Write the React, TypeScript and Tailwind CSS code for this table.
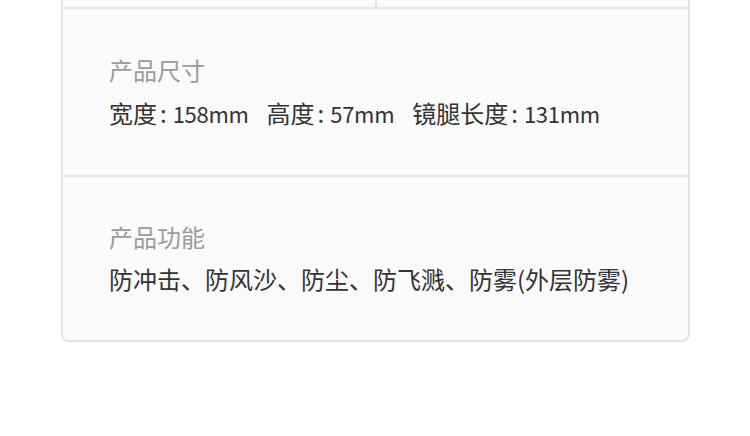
const font = { fontFamily: '"Noto Sans CJK SC", "Noto Sans", sans-serif' };

function Spec({ name, value }: { name: string; value: string }) {
  return (
    <span>
      {name}
      <span className="ml-[3px] mr-[6px]">:</span>
      <span className="text-[22px] tracking-[-0.3px]">{value}</span>
    </span>
  );
}

export default function App() {
  return (
    <div className="w-[750px] h-[436px] bg-white overflow-hidden" style={font}>
      <div className="ml-[61px] w-[629px] bg-[#fafafa] border-2 border-t-0 border-[#e4e4e4] rounded-b-[8px]">
        <div className="grid grid-cols-2 h-[9px] border-b-2 border-[#e4e4e4]">
          <div className="border-r-2 border-[#e4e4e4] w-[314px]" />
          <div />
        </div>

        <div className="h-[168px] border-b-2 border-[#e4e4e4] pl-[46px] pt-[46px]">
          <div className="text-[24px] leading-[30px] text-[#9b9b9b]">产品尺寸</div>
          <div className="mt-[13px] flex gap-[18px] text-[24px] leading-[30px] text-[#333]">
            <Spec name="宽度" value="158mm" />
            <Spec name="高度" value="57mm" />
            <Spec name="镜腿长度" value="131mm" />
          </div>
        </div>

        <div className="h-[163px] pl-[46px] pt-[45px]">
          <div className="text-[24px] leading-[30px] text-[#9b9b9b]">产品功能</div>
          <div className="mt-[12px] text-[24px] leading-[30px] text-[#333]">
            防冲击、防风沙、防尘、防飞溅、防雾(外层防雾)
          </div>
        </div>
      </div>
    </div>
  );
}
